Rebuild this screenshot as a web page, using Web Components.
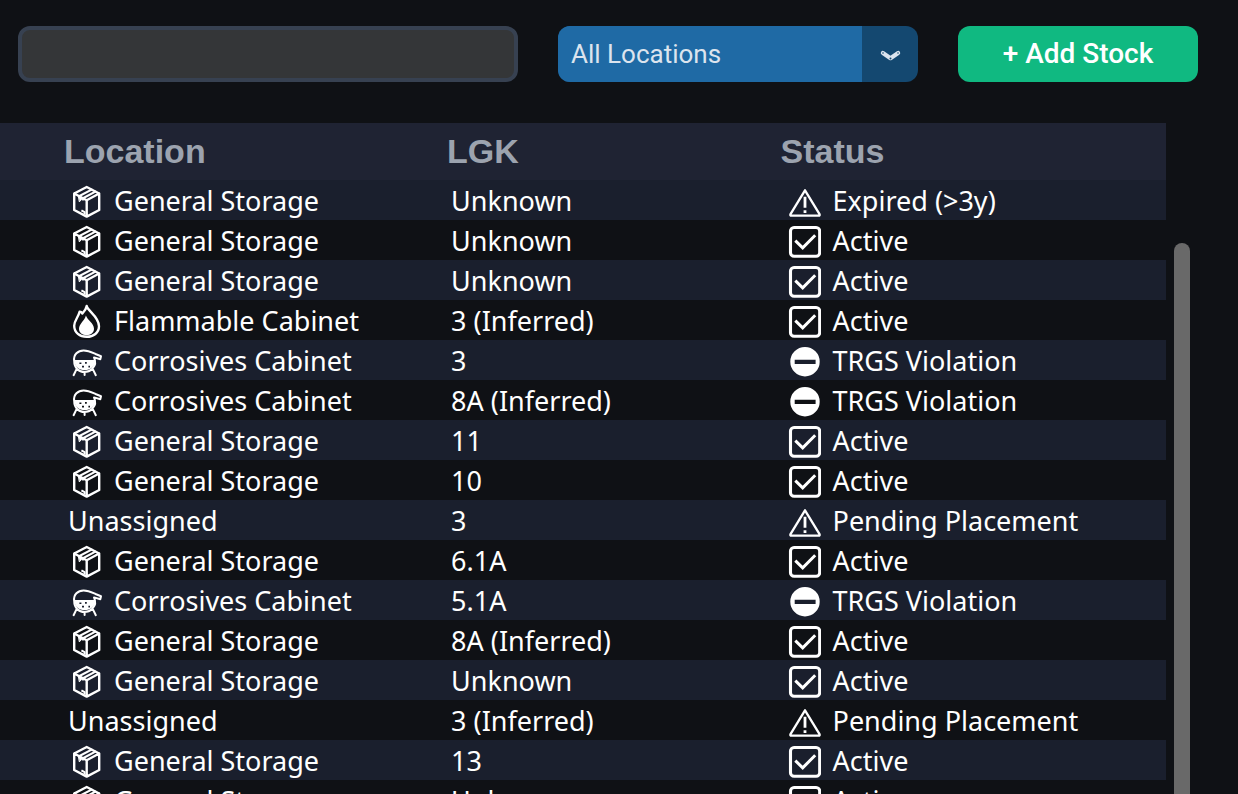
<!DOCTYPE html>
<html lang="en">
<head>
<meta charset="utf-8">
<meta name="viewport" content="width=device-width, initial-scale=1">
<title>Stock</title>
<style>
  html { background: #0f1115; }
  body { margin: 0; font-family: "Noto Sans", sans-serif; color: #fff; }
</style>
</head>
<body>
<stock-app></stock-app>

<template id="app-tpl">
  <style>
    :host { display: flex; flex-direction: column; height: 100vh; overflow: hidden; background: #0f1115; }
    stock-toolbar { flex: none; }
    main { flex: 1; min-height: 0; display: flex; gap: 8px; padding-right: 48px; }
    stock-table { flex: 1; min-width: 0; overflow: hidden; }
  </style>
  <stock-toolbar>
    <search-box label="Search stock"></search-box>
    <location-select></location-select>
    <action-button>+ Add Stock</action-button>
  </stock-toolbar>
  <main>
    <stock-table></stock-table>
    <scroll-thumb></scroll-thumb>
  </main>
</template>

<template id="toolbar-tpl">
  <style>
    :host { display: grid; grid-template-columns: 500fr 360fr 240fr; gap: 40px; padding: 26px 40px 41px 18px; }
  </style>
  <slot></slot>
</template>

<template id="search-tpl">
  <style>
    :host { display: block; min-width: 0; }
    input { display: block; box-sizing: border-box; width: 100%; height: 56px; margin: 0; padding: 0 12px;
      border: 4px solid #374151; border-radius: 12px; background: #343638; color: #dce4ee;
      font: 26px Roboto, sans-serif; outline: none; }
  </style>
  <input type="text">
</template>

<template id="select-tpl">
  <style>
    :host { display: grid; grid-template-columns: 1fr 56px; min-width: 0; border-radius: 12px; overflow: hidden; background: #144870; }
    select { grid-area: 1 / 1 / 2 / 3; width: 100%; height: 56px; margin: 0; padding: 0 56px 0 13px; border: 0; border-radius: 0;
      appearance: none; background: linear-gradient(#1f6aa5, #1f6aa5) 0 0 / calc(100% - 56px) 100% no-repeat;
      color: #dce4ee; font: 26px Roboto, sans-serif; outline: none; }
    svg { grid-area: 1 / 2; width: 56px; height: 56px; pointer-events: none; }
  </style>
  <select aria-label="Location">
    <option>All Locations</option>
    <option>General Storage</option>
    <option>Flammable Cabinet</option>
    <option>Corrosives Cabinet</option>
  </select>
  <svg viewBox="0 0 56 56" aria-hidden="true">
    <path d="M20.900 27L28.500 32.200L36.100 27" fill="none" stroke="#dce4ee" stroke-width="4.200" stroke-linecap="round" stroke-linejoin="round"/>
    <g fill="#144870"><circle cx="21" cy="27" r=".8"/><circle cx="36" cy="27" r=".8"/><circle cx="28.500" cy="32.600" r="1"/></g>
  </svg>
</template>

<template id="button-tpl">
  <style>
    :host { display: block; min-width: 0; }
    button { display: block; width: 100%; height: 56px; margin: 0; padding: 0 8px 2px; border: 0; border-radius: 12px;
      background: #10b981; color: #fff; font: 500 28px Roboto, sans-serif; }
  </style>
  <button type="button"><slot></slot></button>
</template>

<template id="thumb-tpl">
  <style>
    :host { display: flex; flex: none; width: 16px; padding-top: 120px; }
    div { flex: 1; border-radius: 8px 8px 0 0; background: #696969; }
  </style>
  <div></div>
</template>

<template id="icon-tpl">
  <style>
    :host { display: block; flex: none; width: 36px; height: 36px; }
    svg { display: block; width: 100%; height: 100%; }
  </style>
  <svg viewBox="0 0 36 36" fill="none" stroke="currentColor" stroke-width="2" stroke-linejoin="round" stroke-linecap="round" aria-hidden="true"></svg>
</template>

<template id="table-tpl">
  <style>
    :host { display: block; }
    table { width: 100%; table-layout: fixed; border-collapse: collapse; }
    .location { width: 38%; }
    .lgk { width: 28.6%; }
    th { height: 57px; padding: 0 4px 2px; box-sizing: border-box; background: #1f2333; color: #9ca3af; text-align: left;
      font: bold 34px/54px "Liberation Sans", sans-serif; }
    td { height: 40px; padding: 0 8px; font-size: 27px; line-height: 40px; white-space: nowrap; }
    th:first-child { padding-left: 64px; }
    td:first-child { padding-left: 68px; }
    tbody tr:nth-child(odd) { background: #1a1f2d; }
    .cell { display: flex; align-items: center; height: 40px; gap: 10px; }
    .cell span { padding-top: 2px; }
    td:last-child .cell { gap: 12px; }
  </style>
  <table>
    <colgroup><col class="location"><col class="lgk"><col></colgroup>
    <thead><tr><th scope="col">Location</th><th scope="col">LGK</th><th scope="col">Status</th></tr></thead>
    <tbody></tbody>
  </table>
</template>

<script>
  const stamp = (host, id) => {
    const root = host.attachShadow({ mode: "open" });
    root.append(document.getElementById(id).content.cloneNode(true));
    return root;
  };

  const ICONS = {
    box: '<path stroke-width="2.400" d="M18.700 5L31.200 11.500V28L18.700 34.600L6.200 28V11.500ZM6.200 11.500L18.700 18.200L31.200 11.500M18.700 18.200V34.600"/><path stroke-width="2.200" d="M23.600 7.600L11 14.200M27.400 9.600L15 16.200"/><path fill="currentColor" stroke-width="1" d="M10.600 14L15.400 16.400V18.200L13.400 17.600L11.600 19.600Z"/><path stroke-width="2" stroke-linecap="butt" d="M13.400 28.400L16.600 30.200V32"/>',
    flame: '<path stroke-width="2.400" d="M18.700 4C19.500 9 31 14.600 31 24.300C31 30.800 25.500 34.800 18.700 34.800C11.800 34.800 6.200 30.600 6.200 23.800C6.200 18.500 10.200 15.600 11.600 9.800C13.100 9.600 13.800 10.600 14.400 11.500C16.600 9.200 18.300 6.600 18.700 4Z"/><path fill="currentColor" stroke="none" d="M17.900 13.600C19.300 18 26 21.300 26 26.800C26 30.800 22.600 33.200 18.600 33.200C14.500 33.200 11 30.800 11 26.800C11 21.700 16.900 18.700 17.900 13.600Z"/>',
    flask: '<path stroke-width="2" d="M6.200 19C5.200 12.600 10 8.400 15.600 8.400C20.800 8.400 24.500 10.600 27.500 12L33 14.200L32.300 17.200L26 15.400C28.500 21 26.500 24.400 24.600 26.200M6.200 19C6.200 25.600 10.500 30 16.600 30C22.500 30 27 25.600 27 19M8.800 26.600L5.600 33.200M24.600 26.600L27.800 33.200M16.600 30V33"/><path fill="currentColor" stroke="none" fill-rule="evenodd" d="M6.400 18H27C27 24.500 22.500 28.200 16.700 28.200C10.900 28.200 6.400 24.500 6.400 18ZM11.400 20.400V22H13.400V20.400ZM17 20V21.800H18.800V20ZM14 23.800V25.400H16V23.800ZM20.400 23.800V25.400H22V23.800Z"/>',
    warning: '<path stroke-width="2.300" d="M20 8.300L34.500 32.200C34.900 33.300 34.500 33.700 33.700 33.700H6.300C5.500 33.700 5.100 33.300 5.500 32.200Z"/><path stroke-width="2.800" stroke-linecap="butt" d="M20 14.800V25.800M20 28.200V31"/>',
    check: '<rect x="5.500" y="5.500" width="29.200" height="28.800" rx="3.600" stroke-width="3.100"/><path stroke-width="3" stroke-linecap="butt" stroke-linejoin="miter" d="M10.300 18.600L17.700 25.800L30.200 13.300"/>',
    stop: '<path fill="currentColor" stroke="none" fill-rule="evenodd" d="M20 5A14.700 14.700 0 1 1 20 34.400A14.700 14.700 0 1 1 20 5ZM9.700 17.700V21.900H30.600V17.700Z"/>'
  };

  const PLACES = { G: ["General Storage", "box"], F: ["Flammable Cabinet", "flame"], C: ["Corrosives Cabinet", "flask"], U: ["Unassigned"] };
  const STATES = { A: ["Active", "check"], E: ["Expired (>3y)", "warning"], T: ["TRGS Violation", "stop"], P: ["Pending Placement", "warning"] };
  const STOCK = [
    ["G", "Unknown", "E"], ["G", "Unknown", "A"], ["G", "Unknown", "A"], ["F", "3 (Inferred)", "A"],
    ["C", "3", "T"], ["C", "8A (Inferred)", "T"], ["G", "11", "A"], ["G", "10", "A"],
    ["U", "3", "P"], ["G", "6.1A", "A"], ["C", "5.1A", "T"], ["G", "8A (Inferred)", "A"],
    ["G", "Unknown", "A"], ["U", "3 (Inferred)", "P"], ["G", "13", "A"], ["G", "Unknown", "A"]
  ];

  customElements.define("stock-icon", class extends HTMLElement {
    connectedCallback() {
      if (this.shadowRoot) return;
      stamp(this, "icon-tpl").querySelector("svg").innerHTML = ICONS[this.getAttribute("name")];
    }
  });

  customElements.define("search-box", class extends HTMLElement {
    connectedCallback() {
      if (this.shadowRoot) return;
      stamp(this, "search-tpl").querySelector("input").setAttribute("aria-label", this.getAttribute("label"));
    }
  });

  customElements.define("stock-table", class extends HTMLElement {
    connectedCallback() {
      if (this.shadowRoot) return;
      const body = stamp(this, "table-tpl").querySelector("tbody");
      for (const [place, lgk, state] of STOCK) {
        const row = body.insertRow();
        this.fill(row.insertCell(), PLACES[place]);
        this.fill(row.insertCell(), [lgk]);
        this.fill(row.insertCell(), STATES[state]);
      }
    }
    fill(cell, [text, icon]) {
      const box = document.createElement("div");
      box.className = "cell";
      if (icon) {
        const mark = document.createElement("stock-icon");
        mark.setAttribute("name", icon);
        box.append(mark);
      }
      const span = document.createElement("span");
      span.textContent = text;
      box.append(span);
      cell.append(box);
    }
  });

  const plain = { "stock-toolbar": "toolbar-tpl", "location-select": "select-tpl", "action-button": "button-tpl", "scroll-thumb": "thumb-tpl", "stock-app": "app-tpl" };
  for (const [tag, id] of Object.entries(plain)) {
    customElements.define(tag, class extends HTMLElement {
      connectedCallback() { if (!this.shadowRoot) stamp(this, id); }
    });
  }
</script>
</body>
</html>
